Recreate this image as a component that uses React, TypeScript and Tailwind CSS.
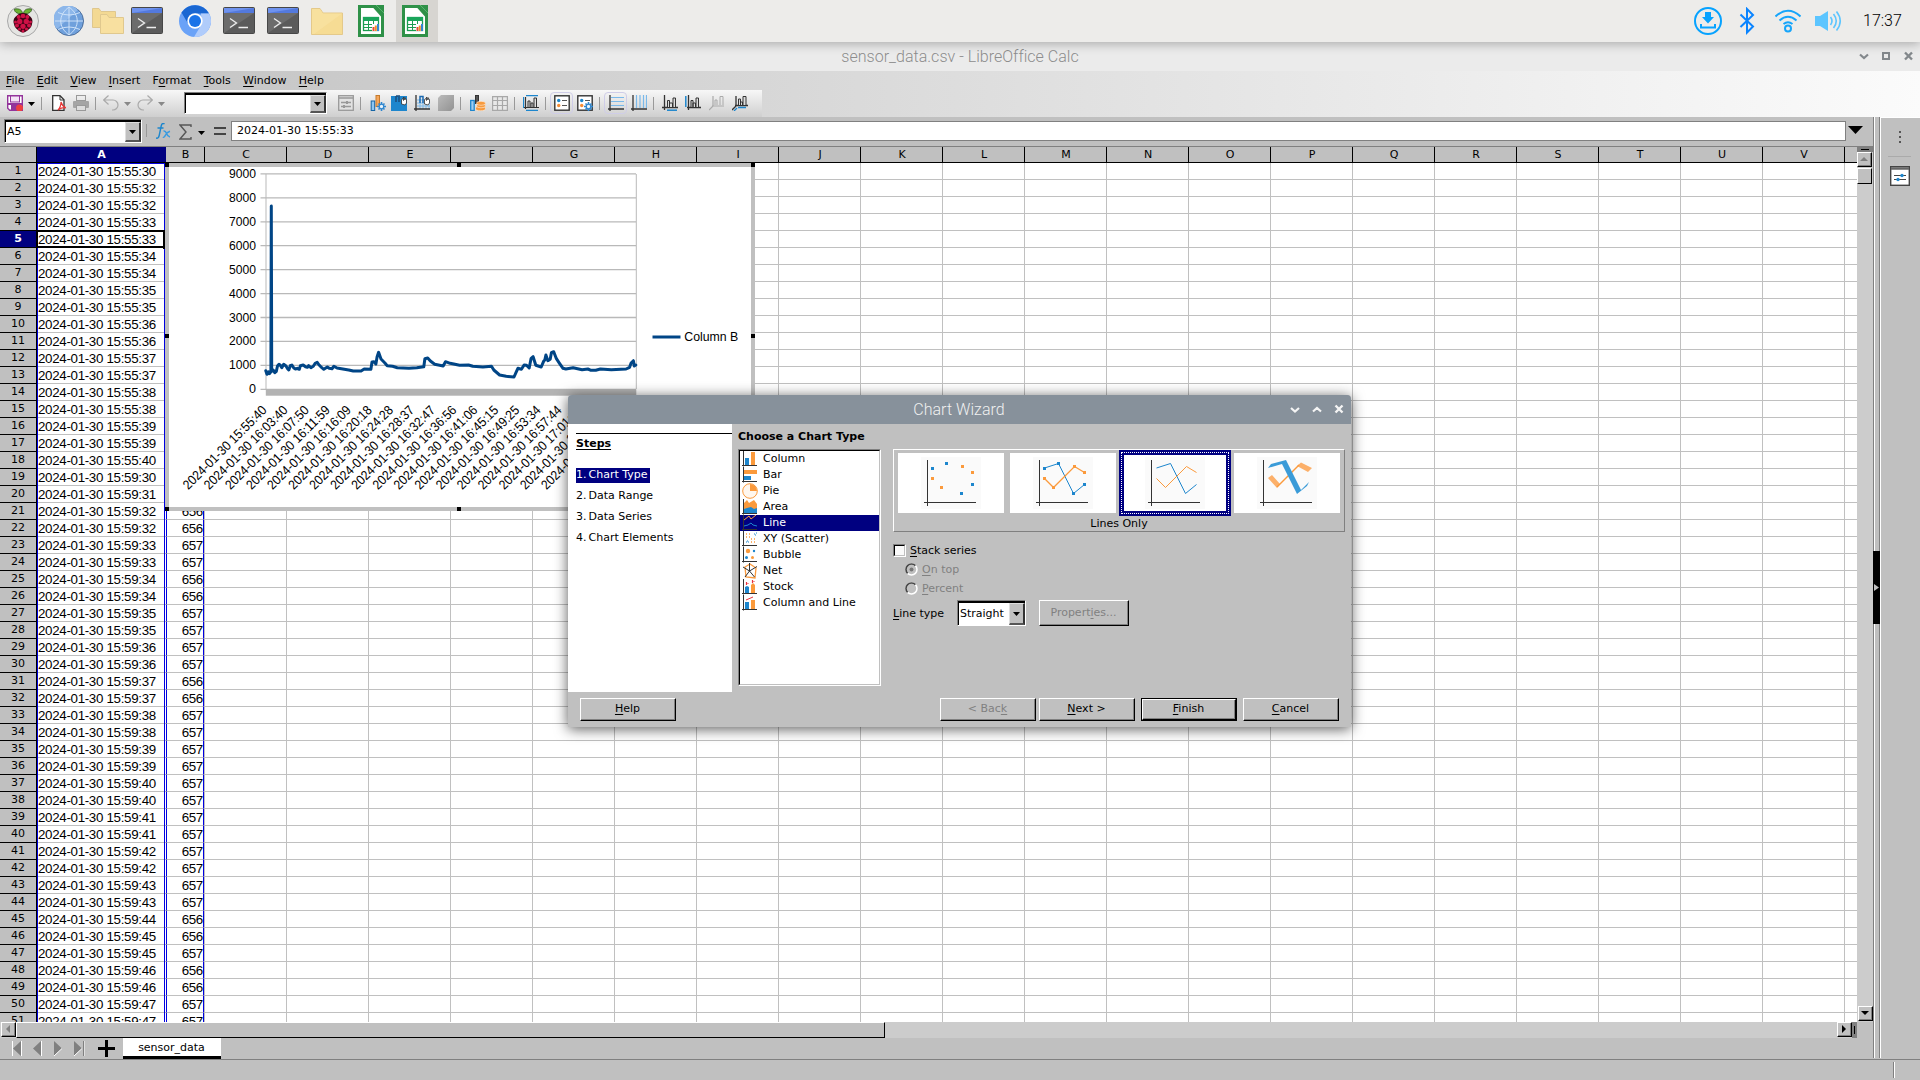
import React from 'react';

const ui = "font-['DejaVu_Sans',sans-serif] text-[11px]";

/* Renders a label whose mnemonic letter follows a "~" and is underlined. */
function M({ t }: { t: string }) {
  const i = t.indexOf('~');
  if (i < 0) return <>{t}</>;
  return (
    <span className="whitespace-pre">
      {t.slice(0, i)}
      <span className="underline underline-offset-2">{t[i + 1]}</span>
      {t.slice(i + 2)}
    </span>
  );
}

function Svg({ w = 16, h = 16, className = '', children }: { w?: number; h?: number; className?: string; children: React.ReactNode }) {
  return (
    <svg width={w} height={h} viewBox={`0 0 ${w} ${h}`} fill="none" className={`shrink-0 ${className}`}>
      {children}
    </svg>
  );
}

/* ---------- panel icons ---------- */
function Terminal({ className = '' }) {
  return (
    <Svg w={32} h={28} className={className}>
      <rect x=".5" y=".5" width="31" height="26" rx="1" fill="#5b5b5b" stroke="#474747" />
      <path d="M1 26 31 6V1H1z" fill="#6c6c6c" />
      <rect x="1" y="1" width="30" height="5" fill="#5379dd" />
      <path d="M1 6 1 1H31z" fill="#6f93ef" />
      <path d="M7 11.500 13.500 16 7 20.500M15.500 20.500H25" stroke="#eee" strokeWidth="1.300" />
    </Svg>
  );
}
function Folder({ className = '' }) {
  return (
    <Svg w={32} h={27} className={className}>
      <path d="M.5 26.500V.5H9l3 4.500H31.500V26.500z" fill="#f6dc94" stroke="#e4c98a" />
      <path d="M1 26V1H9l3 4.500H31L3 26z" fill="#f9e2a2" opacity=".7" />
    </Svg>
  );
}
function CalcIcon() {
  return (
    <Svg w={26} h={32}>
      <path d="M1.500 1.500H16L24.500 11V30.500H1.500z" fill="#fff" stroke="#2f9148" strokeWidth="3" />
      <path d="M15 0H26V12z" fill="#2f9148" />
      <path d="M18 0 26 8" stroke="#58b56d" strokeWidth="1" />
      <rect x="5.500" y="12.500" width="15" height="13" fill="#fff" stroke="#1c9c50" strokeWidth="1.300" />
      <rect x="5" y="12" width="16" height="4" fill="#1aa55a" />
      <path d="M5 19.500H21M5 22.500H21M10.500 16v9M15.500 16v9" stroke="#1c9c50" />
      <rect x="14" y="19" width="7" height="7" fill="#fff" />
      <path d="M15.500 22v4" stroke="#e8483a" strokeWidth="2" />
      <path d="M17.800 20.500V26" stroke="#f0902a" strokeWidth="2" />
      <path d="M20 19V26" stroke="#3187d4" strokeWidth="2" />
    </Svg>
  );
}

function Panel() {
  return (
    <div className="relative z-20 flex h-[42px] items-center bg-[#edecea] shadow-[0_2px_10px_rgba(0,0,0,0.28)]">
      <Svg w={32} h={32} className="ml-[7px]">
        <circle cx="16" cy="16" r="15.500" fill="#e5e5e3" stroke="#a8a8a8" />
        <path d="M15.500 9C9 9 7 6 7.500 4c4-.5 7 0 8 4zM16.500 9C23 9 25 6 24.500 4c-4-.5-7 0-8 4z" fill="#6ab434" stroke="#264a15" strokeWidth=".7" />
        <path d="M16 8c3 0 5 1 6.500 3 3 2 3.500 5 2.500 8-.5 4-4 6-6 7.500-1.500 1.300-4.500 1.300-6 0C11 25 7.500 23 7 19c-1-3-.5-6 2.500-8C11 9 13 8 16 8z" fill="#3b0414" />
        <g fill="#cf1146">
          <circle cx="16" cy="11" r="2.300" /><circle cx="11.700" cy="12" r="2" /><circle cx="20.300" cy="12" r="2" />
          <circle cx="12.700" cy="16.500" r="2.700" /><circle cx="19.300" cy="16.500" r="2.700" /><circle cx="8.500" cy="17" r="1.500" /><circle cx="23.500" cy="17" r="1.500" />
          <circle cx="10" cy="20.500" r="2" /><circle cx="22" cy="20.500" r="2" /><circle cx="16" cy="21.300" r="2.600" />
          <circle cx="12.500" cy="24" r="1.600" /><circle cx="19.500" cy="24" r="1.600" /><circle cx="16" cy="26" r="1.500" />
        </g>
      </Svg>
      <Svg w={30} h={30} className="ml-[15px]">
        <circle cx="15" cy="15" r="14.500" fill="#6fa0dc" stroke="#4d6f9c" />
        <path d="M3 23A14 14 0 0 1 24 4z" fill="#8db7ea" />
        <path d="M15 1v28M1 15h28M15 1C4 9 4 21 15 29M15 1c11 8 11 20 0 28M4 6.500q11 5 22 0M4 23.500q11-5 22 0" stroke="#d5e6fa" strokeWidth=".9" />
      </Svg>
      <Svg w={32} h={26} className="ml-2">
        <path d="M.5 19.500V.5H7l2 3H23.500v16z" fill="#f3d993" stroke="#dfc78e" />
        <path d="M8.500 25.500V6.500H15l2 3H31.500v16z" fill="#f8e0a0" stroke="#e0c88e" />
      </Svg>
      <Terminal className="ml-[7px]" />
      <Svg w={32} h={32} className="ml-4">
        <circle cx="16" cy="16" r="16" fill="#6aa2f7" />
        <path d="M2.500 7.500A16 16 0 0 1 30 8.500H16L9.500 19.500z" fill="#1a67d2" />
        <path d="M30 8.500A16 16 0 0 1 15 32L22.500 19.500 22 8.500z" fill="#b0ccfb" />
        <circle cx="16" cy="16" r="7.700" fill="#fff" /><circle cx="16" cy="16" r="6" fill="#1a73e8" />
      </Svg>
      <Terminal className="ml-3" />
      <Terminal className="ml-3" />
      <Folder className="ml-3" />
      <div className="ml-[15px]"><CalcIcon /></div>
      <div className="ml-3 flex h-[42px] w-[42px] items-center bg-[#d7d5d1] pl-1.5"><CalcIcon /></div>

      <div className="ml-auto flex items-center">
        <Svg w={28} h={28}>
          <circle cx="14" cy="14" r="13" stroke="#06a2ff" strokeWidth="2" />
          <path d="M11 5h6v5h3l-6 6.500L8 10h3z" fill="#06a2ff" /><path d="M7 17v3.500H21V17" stroke="#06a2ff" strokeWidth="2" />
        </Svg>
        <Svg w={16} h={28} className="ml-[17px]">
          <path d="M1.500 7.500 14 19.500 8 25.500V2L14 8 1.500 20" stroke="#0a84ff" strokeWidth="2" />
        </Svg>
        <Svg w={26} h={26} className="ml-[20px]">
          <path d="M.5 8.500Q13-3 25.500 8.500M4.500 12.500q8.500-7.500 17 0M8.500 16q4.500-3.500 9 0" stroke="#16a5fb" strokeWidth="2" />
          <circle cx="13" cy="20.500" r="3" stroke="#16a5fb" strokeWidth="2" />
        </Svg>
        <Svg w={27} h={22} className="ml-[14px]">
          <path d="M0 6H5L13 1V21L5 16H0z" fill="#5cc5ff" />
          <path d="M15.500 7q3 4 0 8M18.500 4q5.500 7 0 14M21.500 1.500q7.500 9.500 0 19" stroke="#5cc5ff" strokeWidth="1.600" />
        </Svg>
        <span className="ml-[21px] w-[57px] font-['Roboto'] text-[16px] font-light text-black">17:37</span>
      </div>
    </div>
  );
}

function Titlebar() {
  return (
    <div className="relative flex h-[29px] items-center justify-center bg-[#ebebeb] pt-[1px]">
      <span className="font-['Roboto'] text-[16px] font-light leading-none tracking-[0.02px] text-[#8d8d8d]">sensor_data.csv - LibreOffice Calc</span>
      <Svg w={54} h={10} className="absolute right-[7px] top-[9px]">
        <path d="M1 3.500 5 7l4-3.500" stroke="#83888c" strokeWidth="2.200" />
        <rect x="24" y="2" width="6" height="6" stroke="#83888c" strokeWidth="2" />
        <path d="M46 1.500l7 7M53 1.500l-7 7" stroke="#83888c" strokeWidth="2.400" />
      </Svg>
    </div>
  );
}

/* ---------- toolbar ---------- */
const Sep = ({ className = '' }) => <div className={`h-[13px] w-px shrink-0 bg-[#999] ${className}`} />;
const Drop = ({ className = '', color = '#000' }) => (
  <Svg w={7} h={4} className={`mt-0.5 ${className}`}><path d="M0 0h7L3.500 4z" fill={color} /></Svg>
);
function Combo({ className = '', text = '' }) {
  return (
    <div className={`flex shrink-0 border border-[#808080] border-r-white border-b-white bg-white ${className}`}>
      <div className="flex flex-1 border-t-2 border-l border-black">
        <span className="flex flex-1 items-center overflow-hidden whitespace-nowrap pl-px">{text}</span>
        <div className="flex w-[16px] items-center justify-center border border-r-2 border-b-2 border-[#dedede] border-r-[#333] border-b-[#555] bg-[#c0c0c0]">
          <Svg w={7} h={4}><path d="M0 0h7L3.500 4z" fill="#000" /></Svg>
        </div>
      </div>
    </div>
  );
}
const Hand = () => <path d="M10.500 9V4.500l1-1 1 2V2l1.500 3V2.500L15.500 5v3l-1.500 2z" fill="#fff" stroke="#333" strokeWidth=".8" />;
const Axes = ({ c = '#333' }) => <path d="M2 0v16M0 14h16" stroke={c} strokeWidth="1.300" />;
const Gear = ({ x, y }: { x: number; y: number }) => (
  <g transform={`translate(${x} ${y})`} stroke="#2e86cf">
    <path d="M0-4.500v9M-4.500 0h9M-3-3 3 3M3-3-3 3" strokeWidth="1.600" /><circle r="2.300" fill="#e9f4fc" strokeWidth="1.300" />
  </g>
);

function Toolbar() {
  return (
    <div className="flex h-[27px] w-[762px] items-center bg-gradient-to-b from-[#f7f7f7] to-[#cfcfcf] pb-px">
      <Svg className="ml-[7px]">
        <path d="M.7.700h14.600v14.600H2.700l-2-2z" fill="#fff" stroke="#93349b" strokeWidth="1.400" />
        <rect x="3.500" y="1" width="9" height="6" fill="#f3e3f5" stroke="#93349b" /><path d="M4 15v-5h8v5" fill="#93349b" /><rect x="1" y="8" width="14" height="2" fill="#93349b" />
        <circle cx="12.500" cy="13" r="3.500" fill="#ed4040" />
      </Svg>
      <Drop className="ml-[5px]" /><Sep className="ml-[6px]" />
      <Svg w={14} className="ml-[10px]">
        <path d="M.7 15.300V.7H8l4 4V15.300z" fill="#fff" stroke="#333" strokeWidth="1.300" /><path d="M8 1v4h4" stroke="#333" />
        <path d="M6 15c2-2 3-5 3-8 1 4 3 5 5 6-3-1-5 0-8 2z" fill="#fff" stroke="#e53535" strokeWidth="1.200" />
      </Svg>
      <Svg className="ml-[7px]">
        <rect x="3.500" y=".5" width="9" height="5" stroke="#999" /><rect x="0" y="6" width="16" height="7" rx="1" fill="#a5a5a5" /><rect x="3.500" y="10.500" width="9" height="5" fill="#ddd" stroke="#999" />
      </Svg>
      <Sep className="ml-[6px]" />
      <Svg className="ml-[7px]"><path d="M5.500.5.700 5l4.800 4.500M1 5h9a5 5 0 0 1 0 10H9" stroke="#aaa" strokeWidth="1.200" /></Svg>
      <Drop className="ml-[5px]" color="#888" />
      <Svg className="ml-[6px]"><path d="M10.500.5 15.300 5l-4.800 4.500M15 5H6a5 5 0 0 0 0 10h1" stroke="#aaa" strokeWidth="1.200" /></Svg>
      <Drop className="ml-[5px]" color="#888" />
      <Combo className="ml-[19px] h-[22px] w-[143px]" />
      <Svg className="ml-[11px]">
        <rect x=".7" y=".7" width="14.600" height="14.600" fill="#e2e2e2" stroke="#999" strokeWidth="1.300" /><path d="M1 3h14M3 7.500h10M3 11.500h10" stroke="#999" strokeWidth="1.500" /><path d="M9 6v3M6 10v3" stroke="#999" strokeWidth="2" />
      </Svg>
      <Sep className="ml-[6px]" />
      <Svg className="ml-[9px]">
        <rect x="1.200" y="6" width="3.500" height="9.500" fill="#8fc7f1" stroke="#1565a5" /><rect x="6" y=".5" width="3.500" height="11" fill="#f5a65b" stroke="#c57a2b" /><Gear x={11.500} y={11.500} />
      </Svg>
      <Svg className="ml-[5px]">
        <path d="M0 1h16v15H0z" fill="#1d86cd" /><path d="M5 1v6M8 2v5M5 1h4" stroke="#1d4e7c" strokeWidth="1.500" /><Hand />
      </Svg>
      <Svg className="ml-[7px]">
        <path d="M3 5h13M3 8h13M3 11h13M6 4v10M9 4v10M12 4v10M15 4v10" stroke="#7ab9ea" /><Axes /><path d="M6 8V1.500h3V8" stroke="#1c6ab0" strokeWidth="1.500" /><Hand />
      </Svg>
      <Svg className="ml-[8px]">
        <defs><linearGradient id="wall" x1="0" y1="0" x2="1" y2="1"><stop stopColor="#bbb" /><stop offset="1" stopColor="#929292" /></linearGradient></defs>
        <path d="M3 0h13v13l-3 3H0V3z" fill="url(#wall)" />
      </Svg>
      <Sep className="ml-[6px]" />
      <Svg className="ml-[9px]">
        <rect x=".7" y="5.500" width="3.500" height="10" fill="#9fcdf0" stroke="#1d86cd" strokeWidth="1.300" /><rect x="5.500" y=".5" width="3" height="8" fill="#555" stroke="#333" />
        <ellipse cx="10.500" cy="13.500" rx="5" ry="2.300" fill="#f79a3e" stroke="#fff" strokeWidth=".5" /><ellipse cx="11" cy="10.800" rx="4.500" ry="2" fill="#f79a3e" stroke="#fff" strokeWidth=".5" /><ellipse cx="11" cy="8.300" rx="4.500" ry="2" fill="#f79a3e" stroke="#fff" strokeWidth=".5" />
      </Svg>
      <Svg className="ml-[6px]"><path d="M.6 1.600h14.800v13.800H.6zM.6 5.500h14.800M.6 10.500h14.800M5.500 1.600v13.800M10.500 1.600v13.800" stroke="#a8a8a8" strokeWidth="1.200" fill="#e8e8e8" /></Svg>
      <Sep className="ml-[6px]" />
      <Svg className="ml-[8px]"><path d="M3 .7h12M3 15.300h12M.5 2v11" stroke="#1d86cd" strokeWidth="1.300" /><path d="M2.500 2v12M1 12.500h15" stroke="#333" strokeWidth="1.200" /><path d="M5 12V6h2v6M8 12V8h2v4M11 12V3h2.500v9" stroke="#333" fill="#ddd" /></Svg>
      <Sep className="ml-[6px]" />
      <div className="ml-[4px] flex h-[22px] w-[23px] items-center justify-center rounded-sm border border-[#cfcde8]">
        <Svg><rect x=".8" y=".8" width="14.400" height="14.400" fill="#fff" stroke="#333" strokeWidth="1.400" /><path d="M8 5.500h5M8 10.500h5" stroke="#555" /><circle cx="4.700" cy="5.500" r="1.700" fill="#1d86cd" /><circle cx="4.700" cy="10.500" r="1.700" fill="#f78c35" /></Svg>
      </div>
      <Svg className="ml-[4px]"><rect x=".8" y=".8" width="14.400" height="14.400" fill="#fff" stroke="#333" strokeWidth="1.400" /><path d="M8 5.500h5" stroke="#555" /><circle cx="4.700" cy="5.500" r="1.700" fill="#1d86cd" /><circle cx="4.700" cy="10.500" r="1.700" fill="#f78c35" /><Gear x={11.500} y={11.500} /></Svg>
      <Sep className="ml-[6px]" />
      <div className="ml-[4px] flex h-[22px] w-[23px] items-center justify-center rounded-sm border border-[#cfcde8]">
        <Svg><path d="M3 2.500h13M3 6.500h13M3 10.500h13" stroke="#7ab9ea" strokeWidth="1.200" /><Axes /></Svg>
      </div>
      <Svg className="ml-[4px]"><path d="M5.500 0v13M9 0v13M12.500 0v13M15.500 0v13" stroke="#7ab9ea" strokeWidth="1.200" /><Axes /></Svg>
      <Sep className="ml-[6px]" />
      <Svg className="ml-[8px]"><path d="M2.500 0v15M0 12.500h16" stroke="#333" strokeWidth="1.300" /><path d="M5.500 12V5.500h2V12M7.500 12V8h3v4M11 12V3h2.500v9" stroke="#333" fill="#ddd" /><path d="M5 15.200h10" stroke="#1d86cd" strokeWidth="1.500" /></Svg>
      <Svg className="ml-[7px]"><path d="M3.500 0v15M2 12.500h14" stroke="#333" strokeWidth="1.300" /><path d="M6 12V5.500h2V12M8 12V8h2.500v4M11 12V3h2.500v9" stroke="#333" fill="#ddd" /><path d="M.8 1v11" stroke="#1d86cd" strokeWidth="1.500" /></Svg>
      <Svg className="ml-[8px]"><path d="M4 1v10M3 11h12M4 11 0 15" stroke="#aaa" strokeWidth="1.200" /><path d="M6 10V5h2v5M11 10V1.500h3V10" stroke="#aaa" /></Svg>
      <Svg className="ml-[7px]"><path d="M4 1v10M3 10.500h13M4 11 0 15" stroke="#333" strokeWidth="1.300" /><path d="M6.500 10V4h2v6M8.500 10V7h2v3M11 10V1.500h3V10" stroke="#333" fill="#ddd" /><path d="M6 12.500h8M5 13 2 16" stroke="#1d86cd" strokeWidth="1.300" /></Svg>
    </div>
  );
}

function FormulaBar() {
  return (
    <div className="flex h-[29px] items-start">
      <Combo className="ml-[4px] mt-[2px] h-[24px] w-[138px]" text="A5" />
      <Sep className="ml-[4px] mt-[7px]" />
      <Svg w={15} h={17} className="ml-[9px] mt-[6px]">
        <path d="M8.500.8Q6-.5 5.200 3L3.300 12Q2.500 16 0 15M1.500 5h6" stroke="#1d86cd" strokeWidth="1.400" />
        <path d="M7.500 8q2-.5 3 2.500t3.500 3.500M14 8.200Q11 9 9.500 12T7 14" stroke="#3a9be0" strokeWidth="1.500" />
      </Svg>
      <Svg w={13} h={16} className="ml-[8px] mt-[7px]"><path d="M12 3V1H1l6 7-6 7h11v-2" stroke="#555" strokeWidth="1.400" /></Svg>
      <Drop className="ml-[6px] mt-[14px]" />
      <Svg w={12} h={8} className="ml-[9px] mt-[10px]"><path d="M0 1h12M0 7h12" stroke="#444" strokeWidth="2" /></Svg>
      <div className="ml-[5px] mt-[4px] flex h-[20px] w-[1615px] items-center border border-[#808080] bg-white pl-[5px]">2024-01-30 15:55:33</div>
      <Svg w={15} h={8} className="ml-[2px] mt-[9px]"><path d="M0 0h15L7.500 8z" fill="#000" /></Svg>
    </div>
  );
}

/* ---------- sheet ---------- */
const times = [
  ...['30', '32', '32', '33', '33', '34', '34', '35', '35', '36', '36', '37', '37', '38', '38', '39', '39', '40'].map((s) => `15:55:${s}`),
  ...['30', '31', '32', '32', '33', '33', '34', '34', '35', '35', '36', '36', '37', '37', '38', '38', '39', '39', '40', '40', '41', '41', '42', '42', '43', '43', '44', '45', '45', '46', '46', '47', '47'].map((s) => `15:59:${s}`),
];
const low = new Set([21, 22, 25, 26, 31, 32, 45, 46, 48, 49]);
const cols = 'CDEFGHIJKLMNOPQRSTUV'.split('');

function Sheet() {
  return (
    <div className="relative flex h-[876px] w-[1857px] flex-col overflow-hidden border-t border-[#808080] bg-white">
      <div className="flex h-4 shrink-0 border-b border-black bg-[#c0c0c0] text-center leading-[15px]">
        <div className="w-[37px] shrink-0 border-r border-black" />
        <div className="w-[129px] shrink-0 bg-[#000080] font-bold text-white">A</div>
        <div className="w-[39px] shrink-0 border-r border-black pl-px">B</div>
        {cols.map((c) => <div key={c} className="w-[82px] shrink-0 border-r border-black pl-px">{c}</div>)}
      </div>
      {times.map((t, i) => {
        const n = i + 1;
        const sel = n === 5;
        return (
          <div key={n} className="flex h-[17px] shrink-0">
            <div className={`w-[37px] shrink-0 border-r border-b border-black text-center leading-4 ${sel ? 'bg-[#000080] font-bold text-white' : 'bg-[#c0c0c0]'}`}>{n}</div>
            <div className="w-[129px] shrink-0 overflow-hidden whitespace-nowrap border-b border-l border-[#c0c0c0] border-l-[#0000e0] font-['Liberation_Sans'] text-[13.33px] leading-[17px] tracking-[-0.31px]">2024-01-30 {t}</div>
            <div className="w-[38px] shrink-0 border-x border-b border-[#c0c0c0] border-x-[#0000e0] text-right font-['Liberation_Sans'] text-[13.33px] leading-[17px] tracking-[-0.29px]">{n > 20 ? (low.has(n) ? 656 : 657) : ''}</div>
            <div className="w-px shrink-0 border-b border-r border-[#c0c0c0]" />
            {cols.map((c) => <div key={c} className="w-[82px] shrink-0 border-r border-b border-[#c0c0c0]" />)}
            <div className="flex-1 border-b border-[#c0c0c0]" />
          </div>
        );
      })}
      {/* selection outlines */}
      <div className="pointer-events-none absolute left-[37px] top-[16px] h-[870px] w-[128px] border border-[#0000e0]" />
      <div className="absolute left-[36px] top-[83px] h-[18px] w-[129px] border-2 border-black" />
      <div className="absolute left-[163px] top-[98px] h-1 w-1 bg-black" />
      <Chart />
    </div>
  );
}

/* Points of the series in a 1568 x 1110 plotting space. */
const pts: [number, number][] = [
  [272, 662], [275, 673], [279, 665], [281, 671], [285, 665], [286, 168], [287, 664], [291, 660], [295, 668], [299, 664], [302, 648], [306, 643], [309, 645], [313, 653], [318, 643], [324, 648], [328, 656], [331, 660], [335, 647], [339, 645], [344, 654], [348, 657], [353, 655], [358, 658], [361, 647], [368, 645], [374, 650], [379, 652], [382, 647], [388, 653], [394, 649], [399, 640], [404, 637], [409, 645], [416, 653], [421, 658], [430, 651], [435, 655], [442, 656], [447, 649], [455, 654], [470, 657], [485, 660], [497, 663], [517, 663], [525, 657], [542, 658], [545, 636], [550, 635], [555, 642], [558, 620], [562, 607], [568, 627], [578, 639], [584, 647], [598, 649], [610, 653], [640, 655], [660, 653], [678, 650], [681, 626], [688, 624], [695, 633], [706, 643], [728, 648], [734, 635], [746, 640], [770, 646], [793, 645], [804, 649], [830, 651], [852, 649], [858, 660], [873, 675], [890, 679], [910, 681], [916, 665], [920, 655], [929, 658], [936, 645], [942, 646], [949, 654], [954, 625], [959, 620], [966, 646], [980, 651], [986, 634], [989, 630], [992, 615], [997, 632], [1003, 628], [1006, 608], [1012, 605], [1019, 626], [1027, 640], [1036, 655], [1043, 657], [1062, 653], [1085, 659], [1100, 657], [1108, 661], [1120, 661], [1132, 657], [1160, 659], [1198, 657], [1207, 652], [1211, 639], [1217, 632], [1219, 648], [1223, 645]];
const path = pts.map(([x, y], i) => `${i ? 'L' : 'M'}${(x / 2.5705 - 5).toFixed(1)} ${(y / 3 - 13).toFixed(1)}`).join('');
const stamps = ['15:55:40', '16:03:40', '16:07:50', '16:11:59', '16:16:09', '16:20:18', '16:24:28', '16:28:37', '16:32:47', '16:36:56', '16:41:06', '16:45:15', '16:49:25', '16:53:34', '16:57:44', '17:01:53', '17:06:03', '17:10:12'];

function Chart() {
  const handles = [[0, 0], [292, 0], [586, 0], [0, 171], [586, 171], [0, 344], [292, 344], [586, 344]];
  return (
    <svg width="590" height="348" viewBox="0 0 590 348" className="absolute left-[165px] top-[16px] font-['Liberation_Sans'] text-[13.300px]">
      <rect x="2" y="2" width="586" height="344" fill="#fff" stroke="#c0c0c0" strokeWidth="4" />
      {Array.from({ length: 10 }, (_, k) => {
        const y = 226.300 - k * 23.930;
        return (
          <g key={k}>
            <path d={`M95.500 ${y}H471`} stroke="#b9b9b9" strokeWidth="1.300" />
            <text x="91" y={y + 4} textAnchor="end" textLength={k ? 27 : 7} lengthAdjust="spacingAndGlyphs">{k * 1000}</text>
          </g>
        );
      })}
      <path d="M101 11V226M471.300 11V226" stroke="#b9b9b9" />
      <rect x="100.800" y="226.300" width="370.500" height="6.400" fill="#b3b3b3" />
      <path d={path} stroke="#004586" strokeWidth="3" fill="none" strokeLinejoin="round" strokeLinecap="round" />
      {stamps.map((s, i) => (
        <text key={s} transform={`translate(${102.500 + i * 21.070} 248) rotate(-45)`} textAnchor="end" textLength="112" lengthAdjust="spacingAndGlyphs">2024-01-30 {s}</text>
      ))}
      <path d="M487.500 174H515.500" stroke="#004586" strokeWidth="3" />
      <text x="519.300" y="177.500" textLength="54" lengthAdjust="spacingAndGlyphs">Column B</text>
      {handles.map(([x, y]) => <rect key={`${x}-${y}`} x={x} y={y} width="4" height="4" />)}
    </svg>
  );
}

/* ---------- dialog ---------- */
const B = '#1d86cd';
const O = '#fb9a3c';
const K = '#333';
const ax = <path d="M1.500 0v15.500M0 14.500h15" stroke={K} strokeWidth="1" />;
const types: [string, React.ReactNode][] = [
  ['Column', <><path d="M3 7h4v7H3z" fill={B} /><path d="M9 1h4v13H9z" fill={O} />{ax}</>],
  ['Bar', <><path d="M2 3h13v4H2z" fill={O} /><path d="M2 9h7v4H2z" fill={B} />{ax}</>],
  ['Pie', <><circle cx="8" cy="8" r="7.300" fill="#fff7ee" stroke={O} /><path d="M8 8V1a7 7 0 0 1 7 7z" fill={O} /></>],
  ['Area', <><path d="M2 4 5 1l2 3 5-3 3 4v9H2z" fill={O} /><path d="M2 10 5 9l4-1 3 2 3-1v5H2z" fill={B} />{ax}</>],
  ['Line', <><path d="M2 5l5-4 2 3 5-4" stroke={O} /><path d="M2 11l4-1 3-2 2 2 4 1" stroke={B} />{ax}</>],
  ['XY (Scatter)', <><path d="M4 3h1m2 0h1M4 6h1m2 0h1M9 8h1m2 0h1M9 11h1m2 0h1" stroke={O} strokeWidth="1.300" /><path d="M12 3h1m1-1h1m-2 2h1M5 10h1m-2 1h1m1 0h1" stroke={B} />{ax}</>],
  ['Bubble', <><circle cx="6" cy="4" r="2.200" fill={O} /><circle cx="12" cy="4" r="1.200" fill={B} /><circle cx="4.500" cy="10.500" r="1.500" fill={B} /><circle cx="10.500" cy="10.500" r="1.500" fill={O} />{ax}</>],
  ['Net', <><path d="M3 4l5-3 6 4-1 10-9-1z" stroke={O} strokeWidth="1.300" /><path d="M7.500 8V0M7.500 8 1 4M7.500 8 15 3.500M7.500 8 3 14M7.500 8l5 6" stroke={K} /></>],
  ['Stock', <><path d="M3 8l2-1 2 1v6H3z" fill={B} /><path d="M9 6l2-2 2 2v8H9z" fill={O} /><path d="M4.500 3v3M5.500 4.500h1M10.500 1v3M11.500 2.500h1" stroke="#e8323c" strokeWidth="1.200" />{ax}</>],
  ['Column and Line', <><path d="M3 7h4v7H3z" fill={B} /><path d="M9 5h4v9H9z" fill={O} /><path d="M4 5l7-3" stroke="#e8323c" />{ax}</>],
];

function Thumb({ kind }: { kind: number }) {
  const blue = 'M11.500 11 25.500 6.500 40.500 36.500 51.500 27.500';
  const orange = 'M11.500 21.500 20.500 30.500 41.500 9.500 51.500 15.500';
  const dots = (p: number[][], c: string) => p.map(([x, y]) => <rect key={x} x={x - 1.500} y={y - 1.500} width="3" height="3" fill={c} />);
  const sel = kind === 2;
  return (
    <div className="relative flex h-[60px] w-[106px] shrink-0 justify-center bg-white pt-1">
      <Svg w={60} h={52}>
        <path d="M0 0h60v52H0z" fill="#fafafa" />
        <path d="M6.500 3v46M3 45.500h52" stroke={K} />
        {(kind === 1 || sel) && <><path d={blue} stroke={B} /><path d={orange} stroke={O} strokeWidth={sel ? 1 : 1.300} /></>}
        {kind < 2 && <>{dots([[11.500, 11.500], [25.500, 6.500], [40.500, 36.500], [51.500, 27.500]], B)}{dots([[11.500, 21.500], [20.500, 30.500], [41.500, 9.500], [51.500, 15.500]], O)}</>}
        {kind === 3 && <>
          <path d="M11 21 15 18 23 27 20 31zM40 9 44 5.500 55 11 51 15z" fill="#fcb06a" /><path d="M20 30 42 8" stroke={O} strokeWidth="1.500" />
          <path d="M11 11 14 7 29 3 25 7zM25 7 29 3 44 33 40 37zM40 37 44 33 52 25 50 29z" fill="#3a9bd8" />
        </>}
      </Svg>
      {sel && <div className="absolute -left-[3px] -top-[3px] h-[66px] w-[112px] border-5 border-[#000080]"><div className="absolute -inset-[3px] border border-dotted border-white" /></div>}
    </div>
  );
}

function Btn({ t, className = '', disabled = false, focus = false }: { t: string; className?: string; disabled?: boolean; focus?: boolean }) {
  return (
    <div className={`flex h-[23px] w-24 shrink-0 border-black ${focus ? 'border' : ''} ${className}`}>
      <div className={`flex flex-1 items-center justify-center border border-white border-r-black border-b-black ${disabled ? 'text-[#808080]' : 'text-black'}`}>
        <div className="flex size-full items-center justify-center border-r border-b border-[#808080]"><M t={t} /></div>
      </div>
    </div>
  );
}

function Radio({ on = false }) {
  return (
    <Svg w={13} h={13}>
      <circle cx="6.500" cy="6.500" r="5.500" fill="#c0c0c0" stroke="#fff" strokeWidth="1.500" />
      <path d="M2.600 10.400A5.500 5.500 0 0 1 10.400 2.600" stroke="#444" strokeWidth="1.600" />
      {on && <circle cx="6.500" cy="6.500" r="2" fill="#777" />}
    </Svg>
  );
}

function Dialog() {
  return (
    <div className="absolute left-[568px] top-[395px] z-30 flex h-[332px] w-[783px] flex-col overflow-visible rounded-t-sm bg-[#c0c0c0] shadow-[0_2px_14px_rgba(0,0,0,0.65)]">
      <div className="relative flex h-[29px] shrink-0 items-center justify-center rounded-t-sm bg-[#87919b]">
        <span className="-ml-px font-['Roboto'] text-[16px] font-light leading-none tracking-[0.05px] text-[#f0f0f0]">Chart Wizard</span>
        <Svg w={54} h={10} className="absolute right-[7px] top-[9px]">
          <path d="M1 4 5 7.500 9 4M23 7.500 27 4l4 3.500" stroke="#f4f4f4" strokeWidth="2.200" />
          <path d="M45.500 1.500l7 7M52.500 1.500l-7 7" stroke="#f4f4f4" strokeWidth="2.400" />
        </Svg>
      </div>
      <div className="flex h-[268px] shrink-0">
        <div className="w-[164px] shrink-0 bg-white pl-2 pt-[9px]">
          <div className="border-t border-black pt-[2px] font-bold underline underline-offset-2 leading-[16px]">Steps</div>
          <div className="mt-[16px] flex flex-col gap-[6px] leading-[15px]">
            <div className="-mb-px flex h-[15px] w-[74px] gap-[2px] bg-[#000080] leading-[14px] text-white"><span>1.</span><span className="whitespace-nowrap">Chart Type</span></div>
            <div className="flex gap-[2px]"><span>2.</span>Data Range</div>
            <div className="flex gap-[2px]"><span>3.</span>Data Series</div>
            <div className="flex gap-[2px]"><span>4.</span>Chart Elements</div>
          </div>
        </div>
        <div className="ml-[6px] w-[143px] shrink-0 pt-[5px]">
          <div className="h-5 whitespace-nowrap font-bold leading-[15px]">Choose a Chart Type</div>
          <div className="h-[237px] border border-[#808080] border-r-white border-b-white">
            <div className="h-full border border-black border-r-[#c0c0c0] border-b-[#c0c0c0] bg-white">
              {types.map(([name, icon]) => (
                <div key={name} className={`flex h-4 items-center gap-[5px] pl-[2px] ${name === 'Line' ? 'bg-[#000080] text-white' : ''}`}>
                  <Svg>{icon}</Svg><span className="pt-px">{name}</span>
                </div>
              ))}
            </div>
          </div>
        </div>
        <div className="ml-[12px] w-[452px] pt-[25px]">
          <div className="flex h-[83px] flex-col border border-white border-r-[#808080] border-b-[#808080] pl-1 pt-[3px]">
            <div className="flex gap-[6px]">{[0, 1, 2, 3].map((k) => <Thumb key={k} kind={k} />)}</div>
            <div className="mt-[3px] pr-1 text-center leading-4">Lines Only</div>
          </div>
          <div className="mt-[11px] flex h-[15px] items-center gap-[4px]">
            <div className="size-[13px] border border-[#808080] border-r-white border-b-white"><div className="size-full border border-black border-r-[#c0c0c0] border-b-[#c0c0c0] bg-[#fafafa]" /></div>
            <span className="pt-0.5"><M t="~Stack series" /></span>
          </div>
          <div className="ml-3 mt-[4px] flex h-[15px] items-center gap-[4px] text-[#808080]"><Radio on /><span className="pt-0.5"><M t="~On top" /></span></div>
          <div className="ml-3 mt-[4px] flex h-[15px] items-center gap-[4px] text-[#808080]"><Radio /><span className="pt-0.5"><M t="~Percent" /></span></div>
          <div className="mt-[4px] flex items-center">
            <span className="w-[64px] pt-0.5"><M t="~Line type" /></span>
            <Combo className="h-[26px] w-[69px]" text="Straight" />
            <Btn t="Propert~ies..." className="ml-[13px] h-[26px]! w-[90px]! leading-[18px]" disabled />
          </div>
        </div>
      </div>
      <div className="flex pt-[6px]">
        <Btn t="~Help" className="ml-3" />
        <Btn t="< Bac~k" className="ml-[264px]" disabled />
        <Btn t="~Next >" className="ml-[3px]" />
        <Btn t="~Finish" className="ml-[6px]" focus />
        <Btn t="~Cancel" className="ml-[6px]" />
      </div>
    </div>
  );
}

/* ---------- scrollbars, sidebar, footer ---------- */
function ScrollBtn({ d, color = '#000' }: { d: string; color?: string }) {
  return (
    <div className="size-[15px] shrink-0 border border-white border-r-black border-b-black bg-[#c0c0c0]">
      <div className="flex size-full items-center justify-center border-r border-b border-[#808080]"><Svg w={8} h={8}><path d={d} fill={color} /></Svg></div>
    </div>
  );
}

export default function App() {
  return (
    <div className={`relative flex h-[1080px] w-[1920px] flex-col overflow-hidden bg-[#c0c0c0] text-black ${ui}`}>
      <Panel />
      <Titlebar />
      <div className="h-[46px] shrink-0 bg-gradient-to-r from-[#c0c0c0] to-[#fbfbfb]">
        <div className="flex h-[19px] items-center gap-[12.300px] pl-[6px] pt-px">
          {['~File', '~Edit', '~View', '~Insert', 'F~ormat', '~Tools', '~Window', '~Help'].map((m) => <M key={m} t={m} />)}
        </div>
        <Toolbar />
      </div>
      <div className="flex h-[942px] shrink-0">
        <div className="w-[1873px] shrink-0">
          <FormulaBar />
          <div className="flex">
            <Sheet />
            <div className="flex w-4 flex-col bg-[#cccccc]">
              <div className="flex h-[6px] shrink-0 items-center justify-center bg-[#808080]"><div className="h-px w-2 bg-black" /></div>
              <ScrollBtn d="M4 2 8 6H0z" color="#808080" />
              <div className="mt-px h-4 w-[15px] shrink-0 border border-white border-r-black border-b-black bg-[#c0c0c0]" />
              <div className="mb-px ml-px mt-auto"><ScrollBtn d="M0 2h8L4 6z" /></div>
            </div>
          </div>
          <div className="flex h-4 w-[1857px] bg-[#cccccc]">
            <div className="ml-px"><ScrollBtn d="M2 4 6 0v8z" color="#808080" /></div>
            <div className="h-4 w-[869px] border border-white border-r-black border-b-black bg-[#c0c0c0]" />
            <div className="ml-auto"><ScrollBtn d="M2 0 6 4 2 8z" /></div>
            <div className="flex w-[5px] items-center justify-center bg-[#808080]"><div className="h-2 w-px bg-black" /></div>
          </div>
          <div className="flex h-[21px]">
            <Svg w={74} h={16} className="ml-3 mt-[3px]">
              <g fill="#808080"><path d="M9 0v15L1 7.500zM29 0v15L21 7.500zM42 0v15l8-7.500zM62 0v15l8-7.500z" /></g>
              <path d="M.5 0v15M9.500 0v15M29.500 0v15M42 15l8-7.500M62 15l8-7.500M72 0v15" stroke="#fff" /><path d="M71.500 0v15" stroke="#808080" />
            </Svg>
            <Svg w={17} h={17} className="ml-[12px] mt-[2px]"><path d="M8.500 0v17M0 8.500h17" stroke="#000" strokeWidth="3" /></Svg>
            <div className="ml-[8px] h-[21px] w-[98px] border-b-3 border-black bg-white pr-px text-center leading-[19px]">sensor_data</div>
          </div>
        </div>
        <div className="flex h-[941px] w-[7px] shrink-0 flex-col border-x border-[#808080] bg-[#c0c0c0] shadow-[inset_1px_0_0_#fff]">
          <div className="-mx-px mt-[434px] flex h-[73px] shrink-0 items-center bg-black pl-px"><Svg w={5} h={7}><path d="M0 0 5 3.500 0 7z" fill="#c0c0c0" /></Svg></div>
        </div>
        <div className="flex h-[941px] flex-1 flex-col items-center border-l border-t border-white pr-0.5">
          <Svg w={4} h={14} className="mt-[12px]"><path d="M1 1h2v2H1zM1 6h2v2H1zM1 11h2v2H1z" fill="#555" /></Svg>
          <div className="mt-[12px] h-px w-[23px] bg-[#aaa]" />
          <Svg w={20} h={20} className="mt-[9px]">
            <rect x=".7" y=".7" width="18.600" height="18.600" fill="#fff" stroke="#444" strokeWidth="1.400" /><path d="M1 2.500h18" stroke="#666" strokeWidth="2.500" />
            <path d="M4 9.500h12M4 13.500h12" stroke="#444" /><circle cx="12" cy="9.500" r="1.700" fill="#1d86cd" /><circle cx="8" cy="13.500" r="1.700" fill="#1d86cd" />
          </Svg>
        </div>
      </div>
      <div className="flex flex-1 border-t border-[#808080] pt-[2px]"><div className="ml-[1893px] h-4 w-[2px] border-l border-[#808080] bg-white" /></div>
      <Dialog />
    </div>
  );
}
